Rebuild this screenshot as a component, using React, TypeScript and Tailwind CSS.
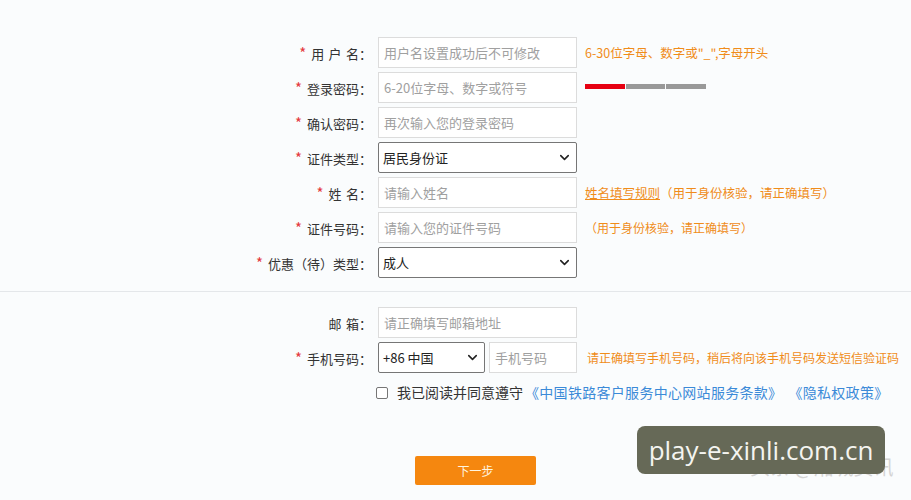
import { ChevronDown } from "lucide-react";

const font = { fontFamily: '"Noto Sans CJK SC", "Noto Sans", sans-serif' };

function Label({ text, required = true, spaced = false }: { text: string; required?: boolean; spaced?: boolean }) {
  return (
    <div className={`w-[374px] pr-[2px] text-right text-[13px] text-[#333] ${spaced ? "[word-spacing:1.5px]" : ""}`}>
      {required && <span className="mr-[5px] text-[15px] leading-none text-[#e4393c]">*</span>}
      {text}
    </div>
  );
}

function TextInput({ placeholder, width = "w-[199px]" }: { placeholder: string; width?: string }) {
  return (
    <div
      className={`${width} flex h-[31px] items-center border border-[#dcdcdc] bg-white px-[5px] text-[13px] text-[#a0a0a0]`}
    >
      {placeholder}
    </div>
  );
}

function Select({ value, width = "w-[199px]" }: { value: string; width?: string }) {
  return (
    <div
      className={`${width} flex h-[31px] items-center justify-between rounded-[2px] border border-[#767676] bg-white pl-[4px] pr-[4px] text-[13px] text-[#222]`}
    >
      <span>{value}</span>
      <ChevronDown className="h-[15px] w-[15px] text-[#222]" strokeWidth={2.5} />
    </div>
  );
}

function Row({ children }: { children: React.ReactNode }) {
  return <div className="flex h-[35px] items-start gap-[4px]">{children}</div>;
}

function Hint({ children, size = "text-[12px]" }: { children: React.ReactNode; size?: string }) {
  return <div className={`ml-[4px] mt-[7px] ${size} text-[#f08c1a]`}>{children}</div>;
}

export default function App() {
  return (
    <div className="relative h-[500px] w-[911px] overflow-hidden bg-[#fafcfd]" style={font}>
      <div className="pt-[37px]">
        <Row>
          <div className="mt-[7px]">
            <Label text="用 户 名：" spaced />
          </div>
          <TextInput placeholder="用户名设置成功后不可修改" />
          <Hint size="text-[12.5px]">6-30位字母、数字或"_",字母开头</Hint>
        </Row>
        <Row>
          <div className="mt-[7px]">
            <Label text="登录密码：" />
          </div>
          <TextInput placeholder="6-20位字母、数字或符号" />
          <div className="ml-[4px] mt-[12px] flex h-[5px] gap-[1px]">
            <div className="w-[40px] bg-[#e60012]" />
            <div className="w-[39px] bg-[#999]" />
            <div className="w-[40px] bg-[#999]" />
          </div>
        </Row>
        <Row>
          <div className="mt-[7px]">
            <Label text="确认密码：" />
          </div>
          <TextInput placeholder="再次输入您的登录密码" />
        </Row>
        <Row>
          <div className="mt-[7px]">
            <Label text="证件类型：" />
          </div>
          <Select value="居民身份证" />
        </Row>
        <Row>
          <div className="mt-[7px]">
            <Label text="姓 名：" spaced />
          </div>
          <TextInput placeholder="请输入姓名" />
          <Hint size="text-[12.5px]">
            <span className="underline">姓名填写规则</span>（用于身份核验，请正确填写）
          </Hint>
        </Row>
        <Row>
          <div className="mt-[7px]">
            <Label text="证件号码：" />
          </div>
          <TextInput placeholder="请输入您的证件号码" />
          <Hint>（用于身份核验，请正确填写）</Hint>
        </Row>
        <Row>
          <div className="mt-[7px]">
            <Label text="优惠（待）类型：" />
          </div>
          <Select value="成人" />
        </Row>
      </div>

      <div className="mt-[9px] h-[1px] bg-[#e4e7ea]" />

      <div className="pt-[15px]">
        <Row>
          <div className="mt-[7px]">
            <Label text="邮 箱：" required={false} spaced />
          </div>
          <TextInput placeholder="请正确填写邮箱地址" />
        </Row>
        <Row>
          <div className="mt-[7px]">
            <Label text="手机号码：" />
          </div>
          <Select value="+86 中国" width="w-[107px]" />
          <TextInput placeholder="手机号码" width="w-[88px]" />
          <Hint>
            <span className="ml-[2px]">请正确填写手机号码，稍后将向该手机号码发送短信验证码</span>
          </Hint>
        </Row>
        <div className="ml-[376px] mt-[5px] flex items-center text-[14px]">
          <div className="h-[12px] w-[12px] rounded-[2px] border border-[#767676] bg-white" />
          <span className="ml-[9px] text-[#333]">我已阅读并同意遵守</span>
          <span className="ml-[2px] tracking-[0.3px] text-[#3b8ad8]">《中国铁路客户服务中心网站服务条款》</span>
          <span className="ml-[6px] tracking-[0.3px] text-[#3b8ad8]">《隐私权政策》</span>
        </div>
        <div className="ml-[415px] mt-[53px] flex h-[29px] w-[121px] items-center justify-center rounded-[2px] bg-[#f5870f] text-[12px] text-[#fff5e0]">
          下一步
        </div>
      </div>

      <div className="absolute left-[750px] top-[452px] text-[20px] text-[#d4d4d4]">
        头条 @湘城资讯
      </div>
      <div
        className="absolute left-[637px] top-[426px] flex h-[48px] w-[248px] items-center justify-center rounded-[8px] bg-[#666957] text-[26px] text-[#f4f4f0]"
        style={{ fontFamily: '"Open Sans", "Noto Sans", sans-serif' }}
      >
        play-e-xinli.com.cn
      </div>
    </div>
  );
}
